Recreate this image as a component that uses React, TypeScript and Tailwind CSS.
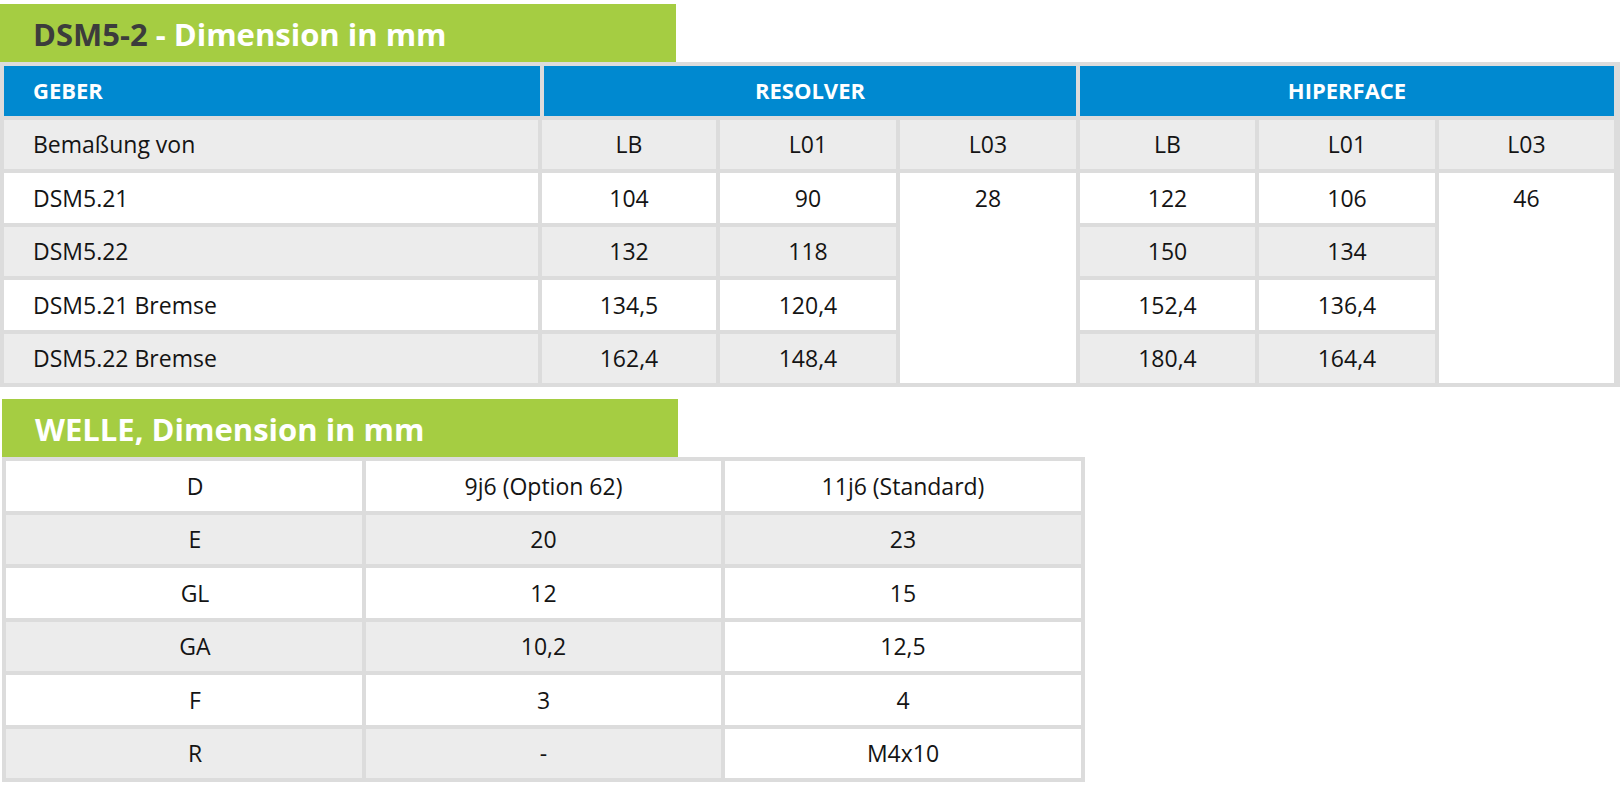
import React from 'react';

// Maßtabellen DSM5-2
const geberRows = [
  { name: 'DSM5.21', res: ['104', '90'], hip: ['122', '106'] },
  { name: 'DSM5.22', res: ['132', '118'], hip: ['150', '134'] },
  { name: 'DSM5.21 Bremse', res: ['134,5', '120,4'], hip: ['152,4', '136,4'] },
  { name: 'DSM5.22 Bremse', res: ['162,4', '148,4'], hip: ['180,4', '164,4'] },
];

const welleRows = [
  { k: 'D', a: '9j6 (Option 62)', b: '11j6 (Standard)', bg: ['bg-white', 'bg-white', 'bg-white'] },
  { k: 'E', a: '20', b: '23', bg: ['bg-[#ececec]', 'bg-[#ececec]', 'bg-[#ececec]'] },
  { k: 'GL', a: '12', b: '15', bg: ['bg-white', 'bg-white', 'bg-white'] },
  { k: 'GA', a: '10,2', b: '12,5', bg: ['bg-[#ececec]', 'bg-[#ececec]', 'bg-white'] },
  { k: 'F', a: '3', b: '4', bg: ['bg-white', 'bg-white', 'bg-white'] },
  { k: 'R', a: '-', b: 'M4x10', bg: ['bg-[#ececec]', 'bg-[#ececec]', 'bg-white'] },
];

const Title: React.FC<{ children: React.ReactNode; className?: string }> = ({ children, className }) => (
  <div
    className={`h-[58px] w-[676px] bg-[#a5cd42] flex items-center pl-[33px] pt-[3px] text-[31px] font-bold text-white ${className ?? ''}`}
  >
    {children}
  </div>
);

export default function App() {
  const cell = 'flex items-center justify-center h-[49.5px]';
  return (
    <div
      className="min-h-screen bg-white text-[#141414] text-[23px]"
      style={{ fontFamily: '"Open Sans", "Noto Sans", sans-serif' }}
    >
      <div className="pt-[4px]">
        <Title>
          <span className="text-[#3c3c3c]">DSM5-2</span>
          <span>&nbsp;- Dimension in mm</span>
        </Title>

        {/* Tabelle Geber */}
        <div className="w-[1620px] bg-[#dcdcdc] p-[4px] grid grid-cols-[534px_174px_176px_176px_175px_176px_175px] gap-x-[4px] gap-y-[4px]">
          <div className="h-[49.5px] bg-[#0089d0] text-white font-bold text-[22px] flex items-center pl-[29px] mr-[-2px]">GEBER</div>
          <div className="col-span-3 h-[49.5px] bg-[#0089d0] text-white font-bold text-[22px] flex items-center justify-center ml-[2px]">RESOLVER</div>
          <div className="col-span-3 h-[49.5px] bg-[#0089d0] text-white font-bold text-[22px] flex items-center justify-center">HIPERFACE</div>

          <div className="h-[49.5px] bg-[#ececec] flex items-center pl-[29px]">Bemaßung von</div>
          {['LB', 'L01', 'L03', 'LB', 'L01', 'L03'].map((h, i) => (
            <div key={i} className={`${cell} bg-[#ececec]`}>{h}</div>
          ))}

          {geberRows.map((r, i) => {
            const bg = i % 2 === 0 ? 'bg-white' : 'bg-[#ececec]';
            return (
              <React.Fragment key={r.name}>
                <div className={`h-[49.5px] ${bg} flex items-center pl-[29px]`}>{r.name}</div>
                <div className={`${cell} ${bg}`}>{r.res[0]}</div>
                <div className={`${cell} ${bg}`}>{r.res[1]}</div>
                {i === 0 && (
                  <div className="row-span-4 bg-white">
                    <div className={cell}>28</div>
                  </div>
                )}
                <div className={`${cell} ${bg}`}>{r.hip[0]}</div>
                <div className={`${cell} ${bg}`}>{r.hip[1]}</div>
                {i === 0 && (
                  <div className="row-span-4 bg-white">
                    <div className={cell}>46</div>
                  </div>
                )}
              </React.Fragment>
            );
          })}
        </div>

        <Title className="mt-[12px] ml-[2px]">WELLE, Dimension in mm</Title>

        {/* Tabelle Welle */}
        <div className="ml-[2px] w-[1083px] bg-[#dcdcdc] p-[4px] grid grid-cols-[356px_355px_356px] gap-[4px]">
          {welleRows.map((r) => (
            <React.Fragment key={r.k}>
              <div className={`${cell} ${r.bg[0]} pl-[22px]`}>{r.k}</div>
              <div className={`${cell} ${r.bg[1]}`}>{r.a}</div>
              <div className={`${cell} ${r.bg[2]}`}>{r.b}</div>
            </React.Fragment>
          ))}
        </div>
      </div>
    </div>
  );
}
